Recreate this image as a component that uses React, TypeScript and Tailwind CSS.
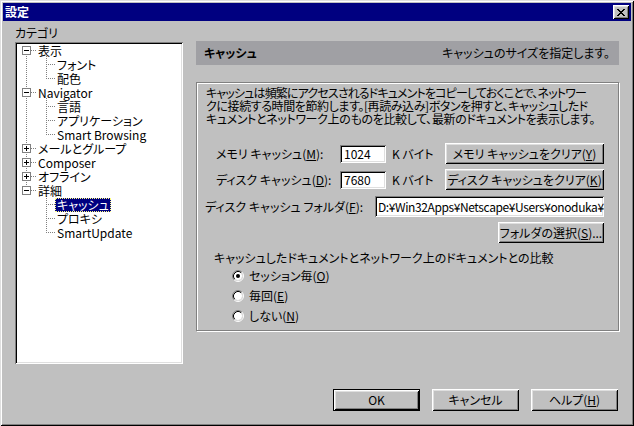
import React from 'react';

const btn =
  "flex items-center justify-center bg-[#c0c0c0] shadow-[inset_1px_1px_0_#fff,inset_-1px_-1px_0_#000,inset_2px_2px_0_#dfdfdf,inset_-2px_-2px_0_#808080] whitespace-nowrap";
const sunken =
  "bg-white shadow-[inset_1px_1px_0_#808080,inset_-1px_-1px_0_#fff,inset_2px_2px_0_#000,inset_-2px_-2px_0_#dfdfdf]";

function U({ children }: { children: React.ReactNode }) {
  return <span className="underline underline-offset-[1px]">{children}</span>;
}

const X_PIX: [number, number][] = [
  [0, 0], [1, 0], [6, 0], [7, 0],
  [1, 1], [2, 1], [5, 1], [6, 1],
  [2, 2], [3, 2], [4, 2], [5, 2],
  [3, 3], [4, 3],
  [2, 4], [3, 4], [4, 4], [5, 4],
  [1, 5], [2, 5], [5, 5], [6, 5],
  [0, 6], [1, 6], [6, 6], [7, 6],
];

function CloseButton() {
  return (
    <div className="w-[16px] h-[14px] bg-[#c0c0c0] shadow-[inset_1px_1px_0_#fff,inset_-1px_-1px_0_#000,inset_2px_2px_0_#dfdfdf,inset_-2px_-2px_0_#808080] flex items-center justify-center pr-[1px]">
      <svg width="8" height="7" shapeRendering="crispEdges">
        {X_PIX.map(([x, y], i) => (
          <rect key={i} x={x} y={y} width="1" height="1" fill="#000" />
        ))}
      </svg>
    </div>
  );
}

type Row = { t: string; lvl: 0 | 1; exp?: '+' | '-'; sel?: boolean };
const ROWS: Row[] = [
  { t: '表示', lvl: 0, exp: '-' },
  { t: 'フォント', lvl: 1 },
  { t: '配色', lvl: 1 },
  { t: 'Navigator', lvl: 0, exp: '-' },
  { t: '言語', lvl: 1 },
  { t: 'アプリケーション', lvl: 1 },
  { t: 'Smart Browsing', lvl: 1 },
  { t: 'メールとグループ', lvl: 0, exp: '+' },
  { t: 'Composer', lvl: 0, exp: '+' },
  { t: 'オフライン', lvl: 0, exp: '+' },
  { t: '詳細', lvl: 0, exp: '-' },
  { t: 'キャッシュ', lvl: 1, sel: true },
  { t: 'プロキシ', lvl: 1 },
  { t: 'SmartUpdate', lvl: 1 },
];

function TreeLines() {
  const roots = ROWS.map((r, i) => (r.lvl === 0 ? i : -1)).filter((i) => i >= 0);
  const groups: { p: number; kids: number[] }[] = [];
  ROWS.forEach((r, i) => {
    if (r.lvl === 0) groups.push({ p: i, kids: [] });
    else groups[groups.length - 1].kids.push(i);
  });
  const lastRoot = roots[roots.length - 1];
  return (
    <svg className="absolute left-0 top-0" width="164" height="318" shapeRendering="crispEdges">
      <line x1="9.5" y1="6" x2="9.5" y2={14 * lastRoot + 7} stroke="#808080" strokeDasharray="1 1" />
      {roots.map((i) => (
        <line key={'h' + i} x1="14" y1={14 * i + 6.5} x2="20" y2={14 * i + 6.5} stroke="#808080" strokeDasharray="1 1" />
      ))}
      {groups
        .filter((g) => g.kids.length > 0)
        .map((g) => (
          <g key={'g' + g.p}>
            <line
              x1="29.5"
              y1={14 * g.p + 12}
              x2="29.5"
              y2={14 * g.kids[g.kids.length - 1] + 7}
              stroke="#808080"
              strokeDasharray="1 1"
            />
            {g.kids.map((k) => (
              <line key={k} x1="31" y1={14 * k + 6.5} x2="38" y2={14 * k + 6.5} stroke="#808080" strokeDasharray="1 1" />
            ))}
          </g>
        ))}
      {roots.map((i) => {
        const r = ROWS[i];
        const y = 14 * i;
        return (
          <g key={'b' + i}>
            <rect x="5.5" y={y + 2.5} width="8" height="8" fill="#fff" stroke="#808080" />
            <rect x="7" y={y + 6} width="5" height="1" fill="#000" />
            {r.exp === '+' && <rect x="9" y={y + 4} width="1" height="5" fill="#000" />}
          </g>
        );
      })}
    </svg>
  );
}

function Tree() {
  return (
    <div className={`mt-[3px] w-[168px] h-[322px] p-[2px] ${sunken}`}>
      <div className="relative w-full h-full">
        <TreeLines />
        <div className="relative flex flex-col">
          {ROWS.map((r, i) => (
            <div key={i} className={`h-[14px] flex items-center ${r.lvl === 0 ? 'pl-[19px]' : 'pl-[38px]'}`}>
              {r.sel ? (
                <span className="h-[14px] leading-[12px] px-[1px] bg-[#000080] text-white border border-dotted border-[#ffff7f] whitespace-nowrap">
                  {r.t}
                </span>
              ) : (
                <span className="h-[14px] leading-[14px] px-[2px] whitespace-nowrap">{r.t}</span>
              )}
            </div>
          ))}
        </div>
      </div>
    </div>
  );
}

function Radio({ checked }: { checked?: boolean }) {
  return (
    <svg width="12" height="12" className="shrink-0">
      <path d="M2.11 9.89 A5.5 5.5 0 0 1 9.89 2.11" fill="none" stroke="#808080" strokeWidth="1" />
      <path d="M9.89 2.11 A5.5 5.5 0 0 1 2.11 9.89" fill="none" stroke="#fff" strokeWidth="1" />
      <circle cx="6" cy="6" r="4" fill="#fff" />
      <path d="M2.82 9.18 A4.5 4.5 0 0 1 9.18 2.82" fill="none" stroke="#000" strokeWidth="1" />
      <path d="M9.18 2.82 A4.5 4.5 0 0 1 2.82 9.18" fill="none" stroke="#dfdfdf" strokeWidth="1" />
      {checked && <circle cx="6" cy="6" r="2" fill="#000" />}
    </svg>
  );
}

export default function App() {
  return (
    <div className="w-[634px] h-[426px] bg-[#c0c0c0] p-[3px] flex flex-col font-['Noto_Sans_CJK_JP',sans-serif] text-[12px] leading-[14px] text-black [font-feature-settings:'palt'] shadow-[inset_1px_1px_0_#dfdfdf,inset_-1px_-1px_0_#000,inset_2px_2px_0_#fff,inset_-2px_-2px_0_#808080]">
      {/* Title bar */}
      <div className="h-[18px] bg-[#000080] flex items-center justify-between pl-[2px] pr-[2px]">
        <span className="text-white font-bold text-[12px] leading-[14px]">設定</span>
        <CloseButton />
      </div>

      <div className="flex">
        {/* Left column */}
        <div className="pl-[12px] pt-[5px] w-[180px]">
          <div className="h-[13px] leading-[13px]">カテゴリ</div>
          <Tree />
        </div>

        {/* Right column */}
        <div className="ml-[13px] pt-[20px] w-[423px] flex flex-col">
          <div className="h-[24px] bg-[#a0a0a4] flex items-center justify-between pl-[8px] pr-[9px]">
            <span className="font-bold">キャッシュ</span>
            <span>キャッシュのサイズを指定します。</span>
          </div>

          <div className="mt-[17px] h-[249px] border border-[#808080] shadow-[inset_1px_1px_0_#fff,1px_1px_0_#fff] pl-[9px] pr-[14px] pt-[3px] flex flex-col">
            <div className="leading-[13px] whitespace-nowrap">
              <div className="tracking-[-0.85px]">
                キャッシュは頻繁にアクセスされるドキュメントをコピーしておくことで、ネットワー
              </div>
              <div className="tracking-[-0.4px]">
                クに接続する時間を節約します。[再読み込み]ボタンを押すと、キャッシュしたド
              </div>
              <div className="tracking-[-0.35px]">
                キュメントとネットワーク上のものを比較して、最新のドキュメントを表示します。
              </div>
            </div>

            <div className="mt-[18px] h-[21px] flex items-center">
              <span className="w-[134px] pl-[10px] whitespace-nowrap">
                メモリ キャッシュ(<U>M</U>):
              </span>
              <div className={`w-[46px] h-[18px] pl-[4px] flex items-center ${sunken}`}>1024</div>
              <span className="ml-[6px] whitespace-nowrap">K バイト</span>
              <div className={`ml-auto w-[159px] h-[21px] ${btn}`}>
                メモリ キャッシュをクリア(<U>Y</U>)
              </div>
            </div>

            <div className="mt-[5px] h-[21px] flex items-center">
              <span className="w-[134px] pl-[10px] whitespace-nowrap">
                ディスク キャッシュ(<U>D</U>):
              </span>
              <div className={`w-[46px] h-[18px] pl-[4px] flex items-center ${sunken}`}>7680</div>
              <span className="ml-[6px] whitespace-nowrap">K バイト</span>
              <div className={`ml-auto w-[159px] h-[21px] ${btn}`}>
                ディスク キャッシュをクリア(<U>K</U>)
              </div>
            </div>

            <div className="mt-[6px] h-[21px] flex items-center">
              <span className="-ml-[1px] whitespace-nowrap">
                ディスク キャッシュ フォルダ(<U>F</U>):
              </span>
              <div className={`ml-auto w-[229px] h-[21px] pl-[3px] pr-[2px] flex items-center overflow-hidden whitespace-nowrap tracking-[-0.4px] ${sunken}`}>
                D:¥Win32Apps¥Netscape¥Users¥onoduka¥cache
              </div>
            </div>

            <div className="mt-[5px] flex justify-end">
              <div className={`w-[106px] h-[21px] ${btn}`}>
                フォルダの選択(<U>S</U>)...
              </div>
            </div>

            <div className="mt-[8px] pl-[8px] leading-[13px] whitespace-nowrap">
              キャッシュしたドキュメントとネットワーク上のドキュメントとの比較
            </div>

            <div className="mt-[2px] flex flex-col pl-[26px]">
              <div className="h-[20px] flex items-center">
                <Radio checked />
                <span className="ml-[5px]">
                  セッション毎(<U>O</U>)
                </span>
              </div>
              <div className="h-[20px] flex items-center">
                <Radio />
                <span className="ml-[5px]">
                  毎回(<U>E</U>)
                </span>
              </div>
              <div className="h-[20px] flex items-center">
                <Radio />
                <span className="ml-[5px]">
                  しない(<U>N</U>)
                </span>
              </div>
            </div>
          </div>
        </div>
      </div>

      {/* Bottom buttons */}
      <div className="mt-[25px] flex justify-end gap-[12px] pr-[13px]">
        <div className="w-[87px] h-[22px] border border-black flex">
          <div className={`flex-1 ${btn}`}>OK</div>
        </div>
        <div className={`w-[87px] h-[22px] ${btn}`}>キャンセル</div>
        <div className={`w-[87px] h-[22px] ${btn}`}>
          ヘルプ(<U>H</U>)
        </div>
      </div>
    </div>
  );
}
